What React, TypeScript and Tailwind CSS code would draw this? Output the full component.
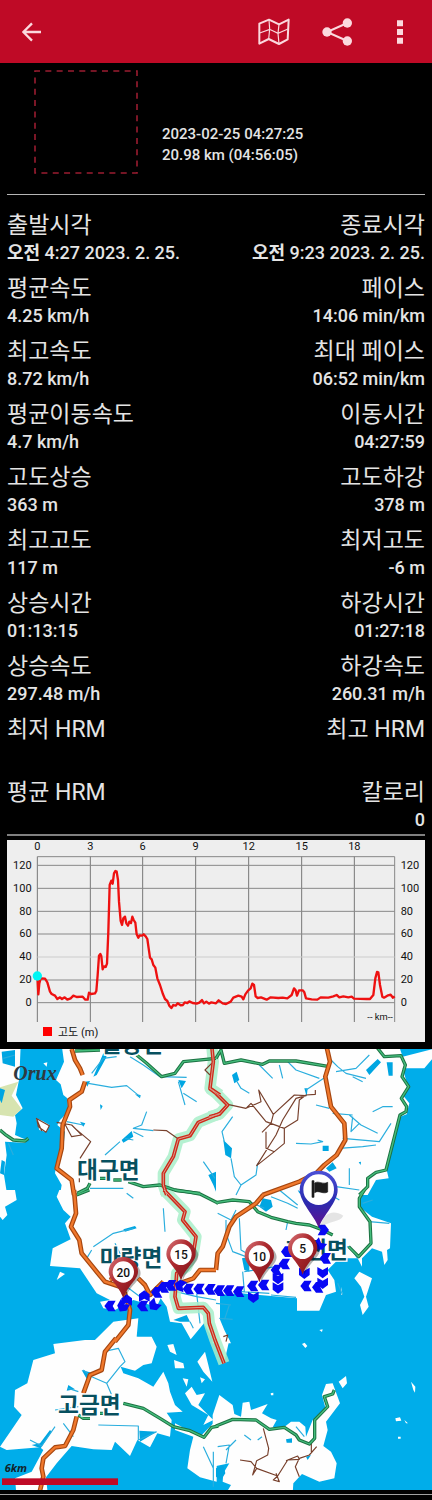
import React from "react";

type Stat = { label: string; value: string; period?: string };

const stats: [Stat, Stat][] = [
  [{ label: "출발시각", period: "오전", value: "4:27 2023. 2. 25." }, { label: "종료시각", period: "오전", value: "9:23 2023. 2. 25." }],
  [{ label: "평균속도", value: "4.25 km/h" }, { label: "페이스", value: "14:06 min/km" }],
  [{ label: "최고속도", value: "8.72 km/h" }, { label: "최대 페이스", value: "06:52 min/km" }],
  [{ label: "평균이동속도", value: "4.7 km/h" }, { label: "이동시간", value: "04:27:59" }],
  [{ label: "고도상승", value: "363 m" }, { label: "고도하강", value: "378 m" }],
  [{ label: "최고고도", value: "117 m" }, { label: "최저고도", value: "-6 m" }],
  [{ label: "상승시간", value: "01:13:15" }, { label: "하강시간", value: "01:27:18" }],
  [{ label: "상승속도", value: "297.48 m/h" }, { label: "하강속도", value: "260.31 m/h" }],
  [{ label: "최저 HRM", value: "" }, { label: "최고 HRM", value: "" }],
  [{ label: "평균 HRM", value: "" }, { label: "칼로리", value: "0" }],
];

function Header() {
  return (
    <header className="flex h-[63px] items-center bg-[#bf0a26] pr-3 pl-3 text-[#fbd9de]">
      <button aria-label="뒤로" className="flex size-10 items-center justify-center">
        <svg viewBox="0 0 60 60" className="size-5" fill="none" stroke="currentColor" strokeWidth="7">
          <path d="M57 30H5M30 4L4 30L30 56" />
        </svg>
      </button>
      <div className="flex flex-1 items-center justify-end gap-[23px]">
        <button aria-label="지도" className="flex size-10 items-center justify-center">
          <svg viewBox="0 0 96 84" className="h-7 w-8" fill="none" stroke="currentColor">
            <path d="M4 17L33 5L63 19L92 5L89 64L63 78L32 63L4 77Z" strokeWidth="6" strokeLinejoin="round" />
            <path d="M33 5L35 34L32 63M63 19L60 46L63 78M5 45L35 34L60 46L90 33" strokeWidth="3.5" />
          </svg>
        </button>
        <button aria-label="공유" className="flex size-10 items-center justify-center">
          <svg viewBox="0 0 90 84" className="h-7 w-[30px]" fill="currentColor" stroke="currentColor">
            <path d="M76 15L15 42L76 69" fill="none" strokeWidth="6" />
            <g stroke="none">
              <circle cx="76" cy="15" r="14" />
              <circle cx="15" cy="42" r="14" />
              <circle cx="76" cy="69" r="14" />
            </g>
          </svg>
        </button>
        <button aria-label="더보기" className="flex size-10 items-center justify-center">
          <svg viewBox="0 0 18 70" className="h-6 w-[6px]" fill="currentColor">
            <path d="M0 0H18V18H0ZM0 26H18V44H0ZM0 52H18V70H0Z" />
          </svg>
        </button>
      </div>
    </header>
  );
}

function Summary() {
  return (
    <section className="mx-[7px] flex items-end gap-6 border-b border-[#b5b5b5] pt-[7px] pb-5 pl-[27px]">
      <svg viewBox="0 0 104 104" className="size-[104px]" fill="none" stroke="#9a1c30" strokeWidth="1.6">
        <rect x="1" y="1" width="102" height="102" strokeDasharray="6 5.33" strokeDashoffset="1" />
      </svg>
      <p className="pb-2 text-[15px] leading-[21px] font-medium whitespace-nowrap text-[#e4e4e4]">
        2023-02-25 04:27:25
        <br />
        20.98 km (04:56:05)
      </p>
    </section>
  );
}

function Cell({ stat, right }: { stat: Stat; right?: boolean }) {
  return (
    <div className={right ? "text-right" : "text-left"}>
      <dt className="text-[23px] leading-7 font-normal whitespace-nowrap">{stat.label}</dt>
      <dd className="min-h-[26px] text-[18px] leading-[26px] font-medium whitespace-nowrap">
        {stat.period && <b>{stat.period} </b>}
        {stat.value}
      </dd>
    </div>
  );
}

const profile =
  "112,423 115,478 118,445 122,430 135,431 142,442 150,470 155,477 165,482 172,492 180,487 186,492 194,487 202,494 212,490 220,482 230,486 248,485 256,494 263,494 267,473 273,477 285,475 289,468 293,420 297,362 301,357 304,364 308,403 312,394 317,396 321,386 325,290 329,150 334,137 338,146 342,115 346,108 350,110 354,135 357,200 362,258 366,270 370,250 375,245 379,265 384,272 388,260 393,264 397,245 401,255 406,263 410,298 415,308 419,301 426,302 431,298 437,304 442,312 446,340 450,368 455,373 460,390 466,398 472,430 480,450 489,478 495,492 502,498 508,512 514,519 520,510 527,512 533,505 542,511 549,510 554,502 562,504 568,499 578,504 590,506 598,503 606,495 612,505 619,500 627,506 634,502 648,505 656,496 668,505 678,507 692,500 700,488 715,482 725,485 730,493 736,478 744,467 752,460 757,446 762,450 767,484 773,489 783,487 800,494 812,487 835,489 848,488 862,490 875,480 882,460 887,466 891,482 897,466 908,466 913,472 918,490 935,493 952,494 962,487 985,488 1000,484 1010,480 1018,487 1030,484 1045,487 1055,485 1062,491 1100,492 1110,492 1120,480 1126,430 1131,411 1135,412 1140,450 1147,485 1152,488 1162,482 1172,479 1179,488 1184,484";

const kmTicks = [
  { x: 112, t: "0" }, { x: 271, t: "3" }, { x: 428, t: "6" }, { x: 587, t: "9" },
  { x: 746, t: "12" }, { x: 905, t: "15" }, { x: 1063, t: "18" },
];
const mTicks = [
  { y: 91, t: "120" }, { y: 160, t: "100" }, { y: 229, t: "80" }, { y: 297, t: "60" },
  { y: 366, t: "40" }, { y: 435, t: "20" }, { y: 503, t: "0" },
];

function ElevationChart() {
  return (
    <section className="mx-[7px] mt-1 bg-[#eeeeee]">
      <svg viewBox="21 15 1254 606" className="block w-full" role="img" aria-label="고도 (m)" fontSize="33" fill="#111">
        <g stroke="#777" strokeWidth="3" fill="none">
          <path d="M112 65H1184M1184 65V561" stroke="#888" />
          {kmTicks.map((k) => <path key={k.t} d={`M${k.x} 65V561`} />)}
          {mTicks.map((m) => <path key={m.t} d={`M112 ${m.y}H1184`} stroke={m.t === "40" ? "#ccc" : "#888"} />)}
        </g>
        {kmTicks.map((k) => <text key={k.t} x={k.x} y="45" textAnchor="middle">{k.t}</text>)}
        {mTicks.map((m) => (
          <g key={m.t}>
            <text x="95" y={m.y + 10} textAnchor="end">{m.t}</text>
            <text x="1202" y={m.y + 10}>{m.t}</text>
          </g>
        ))}
        <polyline points={profile} fill="none" stroke="#ee1111" strokeWidth="7" strokeLinejoin="round" />
        <circle cx="112" cy="423" r="14" fill="#00f5f5" />
        <rect x="129" y="576" width="27" height="27" fill="#f00" />
        <text x="174" y="602">고도 (m)</text>
        <text x="1102" y="556" fontSize="28">-- km--</text>
      </svg>
    </section>
  );
}

type Tile = { x: number; y: number; land: string; water?: string; streams?: string; green?: string; orange?: string; red?: string; trail?: string };

const tiles: Tile[] = [
  {
    x: 0, y: -12,
    land: "M0 0H62L58 100L48 150L68 190L45 210L50 235L45 270L80 285L75 293L15 290L20 330L12 390L20 440L0 450Z M185 0L192 50L168 105L182 118L190 150L202 160L205 200L180 225L172 240L195 260L190 310L170 350L165 385L185 420L180 450H660V0Z M130 55L142 52L140 65Z M108 220L128 228L148 240L140 262L118 255Z",
    water: "M5 20L45 15L45 65L8 55Z M0 130L15 135L5 175L0 165Z M5 345L15 350L12 390L0 385Z M365 285L395 258L400 275L370 293Z M535 105L558 108L545 130Z M300 178L308 183L302 195Z M405 148L422 150L420 160Z M240 230L256 235L250 245Z M625 390L648 380V440L640 420Z M255 110L270 108L262 125Z M290 90L320 35L310 25L280 95Z",
    streams: "M265 115L335 127L380 122L420 155M275 85L310 40L350 35M440 200L425 240L400 250L460 257M400 260L430 275M360 290L315 330M535 110L555 180M550 145L590 170M610 350L645 400M270 430L370 430M10 40L45 30M200 230L250 240M390 35L430 60L480 95L560 97M25 295L40 330M375 280L400 285",
    green: "M225 18L300 15M410 30L440 55L485 95L525 85L550 50L648 40M0 255L15 268L40 285L75 288L85 280M232 445L262 430L270 415M300 400L320 400M340 405L365 405M385 410L430 425L480 420L530 437L600 445",
    orange: "M215 12L225 45L240 70L248 90M255 110L245 140L208 165L210 185L188 240L185 310L170 370L215 405L222 450",
    red: "M635 0L640 50L630 130L660 150M660 205L595 232L570 272L535 282L520 335L490 385L490 420L500 450",
    trail: "M108 220L148 242L138 262L115 245L110 222L125 258M170 232L215 240L245 270L215 275L195 238M225 250L272 290L240 340M238 400V412M460 255L500 257L535 282M635 55L615 75L630 90",
  },
  {
    x: 648, y: -12,
    land: "M-10 0H548L560 35L650 12V40L625 70L560 70L570 105L578 125L560 150L580 175L572 208L552 215L512 375L518 400L480 405L455 450H-10Z",
    water: "M450 75L485 42L495 52L460 90Z M512 52H530V92H518Z M48 90L62 80L70 105L55 115Z M22 285L48 310L45 340L28 330Z M320 302H338V318H320Z M330 370L350 352L362 370L340 380Z M265 130L275 130L272 155Z M428 352L435 350L434 360Z",
    streams: "M60 105L75 130L100 145M50 215L18 260L25 290M45 340L55 395L75 420L120 390L125 355M75 420L60 450M240 295L285 297L320 290L305 285M360 80L420 70L460 30M400 210L435 240L485 265M410 215L405 260L430 235M525 235L490 290L380 280M350 205L410 210M370 310L440 305L480 300M470 200L500 185L530 185M345 45L365 65L390 85L450 100M410 95L440 110M190 60L200 100M215 50L240 75L310 100M300 180L340 190M360 425L430 435M400 370V420M130 60L170 100M270 135L330 95",
    green: "M0 40L15 15L25 55L75 45L140 58L160 48L240 48L340 65M482 6L505 35L555 32L568 60L558 95L578 125L556 160L572 185L570 200L552 210L510 375L480 382L455 400L455 425L430 450",
    orange: "M332 6L342 50L328 95L345 185L385 235L388 285L362 330L325 360L300 385L250 410L140 450",
    red: "M-20 130L0 145L35 180L10 208L-20 215",
    trail: "M35 178L90 190L135 170L128 135L172 208L165 235L138 262M90 190L105 175L150 230L205 250L245 225L250 165L270 150L298 148V135M172 208L235 150L270 152L240 160L200 225L180 270L122 362L175 320L150 310V260M205 250V295L175 320L122 362",
  },
  {
    x: 0, y: 423,
    land: "M0 0L45 0L50 30L15 50L22 75L8 90L0 80Z M178 0L170 20L190 60L212 80L195 100L212 148L158 175L150 228L240 235L250 250L290 310L330 330L300 335L310 355L345 360L400 330L470 350L482 325L500 350L510 395L545 400L572 448L612 400L640 450H660V0Z M170 270L195 252L180 245Z M285 450L340 395L415 385L410 440L450 450Z",
    water: "M370 118L405 108L410 115L375 125Z M520 390L560 375L570 395L540 395Z",
    streams: "M280 170L340 130L400 115M345 160L365 200M490 55L495 125M465 290L590 320L648 330M560 275L560 300M260 205L275 180M570 395L580 415M380 290L420 320M590 310L600 400M380 10L400 25",
    green: "M230 15L268 0M525 0L560 5L600 12L655 40",
    orange: "M222 0L228 70L213 110L238 150L245 190L290 245L315 275L360 290L375 310L390 360L385 405L345 455M330 270L370 245M415 265L435 285L450 315L490 275M545 278L580 265L600 240L648 240",
    red: "M492 0L555 65L548 90L588 140L580 190L560 230L530 250L525 320L535 355L610 352L625 370L628 400L645 450L672 520",
  },
  {
    x: 648, y: 423,
    land: "M-10 0H440L430 50L468 80L525 100L522 175L513 180L515 210L505 225L498 185L468 175L438 205V230L425 205L370 205L335 240L355 270L360 305L330 315L310 362H243V325L75 310L0 315H-10Z M0 360L25 420L45 460H-10V360Z M415 265L430 245L468 265L450 320L458 350L440 375L432 345L445 320L435 290Z M375 290L380 315L376 315Z M310 420L320 418L318 426Z",
    water: "M130 50L140 25L165 30L170 50L150 65Z M78 205L100 200V245L85 240Z M245 0L270 15L250 10Z",
    streams: "M5 70L45 90L60 60M30 90L30 130L50 185L90 200M70 85L75 180L110 200M100 35L145 55M165 20L215 40L245 55M190 0L245 45M80 245L85 305M75 305L160 310M165 315L240 322M340 175L400 170L425 205M215 95L210 120M365 280L380 315M0 340L45 345M40 345L25 390M10 385L50 388M460 95L520 100M440 40L470 30M320 0L370 30M85 245L180 230",
    green: "M0 38L50 30L100 35L125 65L165 82L215 95L240 100L280 105L320 120L350 135M398 170L428 200L465 160L462 95L430 50L430 25L445 0",
    orange: "M142 14L120 40L60 80L40 110L20 170L5 190L0 240",
    trail: "M22 440L35 435L30 455",
  },
  {
    x: 0, y: 873,
    land: "M255 0H285L340 -10H455L470 20L455 70L430 75L405 92L362 80L370 100L415 115L460 140L490 95L505 130L510 155L525 195L548 215L500 218L515 240L510 290L472 280L450 322L412 300L390 348L345 305L335 330L280 328L215 318L170 370L138 412L142 450H48L45 415L95 395L130 330L120 322L20 330L0 320L65 225L42 200L45 150L82 130L100 60L165 40L160 12Z M502 15L520 12L530 45L510 35Z M522 60L550 70L553 85L525 85Z M592 65L615 35L625 75L637 125L610 95Z M548 115L565 118L560 140Z M600 112L615 118L605 130Z M555 160L575 140L590 165L615 160L595 195L640 240L610 255L625 225L575 195Z M525 250L600 290L650 240V425L600 412L562 385L570 330L580 290L525 270Z",
    water: "M205 135L225 148L200 152Z M245 90L275 98L265 125Z M95 315L120 310L150 270L155 275L122 325Z M418 272L470 275L420 305Z",
    streams: "M165 260L125 318L90 300M250 90L275 110L320 130L360 80L375 65L355 25L310 35M320 130L335 165M295 255L415 258V300L470 275M610 320L640 385M205 145L235 155M640 335V440M165 210L235 200M190 250L220 290",
    green: "M370 190L430 205L480 235L520 260L570 272L612 292L635 262L655 258M235 225L250 235L270 235M300 220L310 220",
    orange: "M348 -5L315 35L305 90L270 105L250 160M230 230L220 270L195 318L165 322L130 355L125 385L130 410L118 460",
  },
  {
    x: 648, y: 873,
    land: "M-10 225L10 165L50 195L55 222L75 230L80 188L100 185L105 210L155 192L138 220L165 235L182 240L170 262L200 265L225 245L250 245L268 260L270 290L290 240L330 210L318 165L330 132L350 130L372 190L330 245L335 270L322 318L345 335L362 370L355 415L310 425L258 402L232 430L230 460H30L45 435L20 425L22 400L40 370L-10 380Z M0 -10L24 70L40 0L30 -15Z M368 125L390 108L393 130L380 145Z M258 12L266 8L274 18L268 24Z M585 125L598 140L597 158L592 150Z M538 235L552 232L556 242L540 244Z M565 240L576 250L570 250Z M164 160L172 158L172 166L165 166Z M546 290H554V296H546Z",
    water: "M0 385L22 375L28 400L15 420L0 410Z M210 298L228 295L228 308L212 308Z M270 350L285 345L275 360Z",
    streams: "M5 320L40 315L30 370M30 330L60 300M85 285L105 300M125 300L138 290M240 260L265 290",
    green: "M0 258L50 238L120 240L160 268L205 262L240 285L250 300L280 312L296 295L296 240L335 200L325 170L350 162L355 150",
    trail: "M142 265L158 325L155 345L122 362L110 405L122 385L185 408L215 360L250 358L245 348L210 362M185 408L172 420L190 425L180 400M250 355L280 345L302 320M286 310V340M250 355L238 380L250 410M72 360L105 365L122 385",
  },
];

type Layer = "land" | "water" | "streams" | "green" | "orange" | "red" | "trail";

function MapLayer({ of, ...style }: { of: Layer } & React.SVGProps<SVGGElement>) {
  return (
    <g fill="none" strokeLinejoin="round" {...style}>
      {tiles.map((t, i) => t[of] && <path key={i} transform={`translate(${t.x} ${t.y})`} d={t[of]} />)}
    </g>
  );
}

const arrows: [number, number, number][] = [
  [330, 771, 0], [368, 773, -60], [380, 753, 90], [433, 741, 90], [428, 771, 0], [462, 769, -45], [470, 730, 0], [490, 715, 0],
  [512, 709, 0], [540, 709, 20], [565, 720, 0], [597, 720, 0], [630, 721, 0], [658, 725, 0], [686, 725, 0], [716, 728, 0],
  [760, 745, -90], [758, 711, 0], [791, 708, 0], [834, 717, -90], [834, 689, -90], [829, 663, 0], [853, 645, 0], [860, 608, 0],
  [913, 673, -90], [918, 711, 0], [953, 715, 0], [968, 703, -90], [968, 671, -90], [976, 628, 0], [958, 588, -50], [970, 543, 180],
];

function DistancePin({ x, y, km }: { x: number; y: number; km: string }) {
  return (
    <g transform={`translate(${x} ${y})`}>
      <path d="M4 78C25 30 60 22 50 -8C40 -35 20 -25 10 0Z" fill="#000" opacity=".3" />
      <path d="M0 77C-12 38 -44 22 -44 -3A44 44 0 0 1 44 -3C44 22 12 38 0 77Z" fill="url(#pinRed)" />
      <circle r="32" cy="-2" fill="#fff" />
      <text y="13" textAnchor="middle" fontSize="36" fontWeight="500" fill="#111">{km}</text>
    </g>
  );
}

function TrackMap() {
  return (
    <svg viewBox="0 0 1296 1323" className="mt-[7px] block w-full bg-[#00adea]" role="img" aria-label="트랙 지도">
      <defs>
        <linearGradient id="pinRed" x1="0" y1="0" x2="1" y2="1">
          <stop offset="0" stopColor="#d9787c" />
          <stop offset=".4" stopColor="#ad2a2f" />
          <stop offset="1" stopColor="#7c1016" />
        </linearGradient>
        <linearGradient id="pinBlue" x1="0" y1="0" x2="0" y2="1">
          <stop offset="0" stopColor="#4b50d6" />
          <stop offset=".55" stopColor="#2a2bb0" />
          <stop offset="1" stopColor="#65108e" />
        </linearGradient>
      </defs>
      <MapLayer of="land" fill="#fefefe" />
      <path d="M0 115L55 98L35 140L65 180L40 203L0 198Z" fill="#d7e4b0" />
      <MapLayer of="water" fill="#00a6e2" />
      <MapLayer of="streams" stroke="#2aaede" strokeWidth="3.5" />
      <MapLayer of="red" stroke="#a9efca" strokeWidth="34" opacity=".85" />
      <MapLayer of="trail" stroke="#77402c" strokeWidth="3.5" />
      <MapLayer of="green" stroke="#1c7243" strokeWidth="10" />
      <MapLayer of="green" stroke="#45bd7c" strokeWidth="4" />
      <MapLayer of="red" stroke="#cf2a1c" strokeWidth="11" />
      <MapLayer of="red" stroke="#d9a08c" strokeWidth="3" />
      <MapLayer of="orange" stroke="#a6460f" strokeWidth="14" />
      <MapLayer of="orange" stroke="#f0782c" strokeWidth="7" />
      <g fill="#07505f" stroke="#fff" strokeWidth="8" paintOrder="stroke" fontWeight="700" fontSize="68" textAnchor="middle">
        <text x="395" y="10">칠량면</text>
        <text x="325" y="388">대구면</text>
        <text x="393" y="651">마량면</text>
        <text x="950" y="627">회진면</text>
        <text x="268" y="1093">고금면</text>
      </g>
      <text x="40" y="92" fontFamily="'Liberation Serif', serif" fontStyle="italic" fontWeight="700" fontSize="60" fill="#303a40">Orux</text>
      <g fill="#0808f4">
        {arrows.map(([x, y, turn], i) => (
          <path key={i} d="M-17 0L-5 -16H17L8 0L17 16H-5Z" transform={`translate(${x} ${y}) rotate(${turn})`} />
        ))}
      </g>
      <DistancePin x={908} y={600} km="5" />
      <DistancePin x={778} y={623} km="10" />
      <DistancePin x={543} y={618} km="15" />
      <DistancePin x={370} y={671} km="20" />
      <path d="M960 535C970 490 1000 480 1030 500C1020 520 990 515 960 535Z" fill="#000" opacity=".1" />
      <path d="M956 536C944 500 899 460 899 422A57 57 0 0 1 1013 422C1013 460 968 500 956 536Z" fill="url(#pinBlue)" />
      <circle cx="956" cy="422" r="46" fill="#fff" />
      <path d="M936 395H942V445H936Z M944 402C956 394 968 408 983 400V429C968 437 956 422 944 431Z" fill="#1c1c1c" stroke="#1c1c1c" strokeWidth="2" />
      <text x="14" y="1268" fontFamily="'Open Sans', sans-serif" fontStyle="italic" fontWeight="700" fontSize="33" fill="#12232b">6km</text>
      <rect x="6" y="1288" width="348" height="20" fill="#bf0a26" />
    </svg>
  );
}

export default function App() {
  return (
    <div className="min-h-screen bg-black font-[Roboto,'Noto_Sans_CJK_KR',sans-serif] text-[#e4e4e4]">
      <Header />
      <main>
        <Summary />
        <dl className="mx-[7px] flex flex-col gap-[9px] border-b-2 border-[#808080] pt-[17px] pb-px">
          {stats.map(([a, b]) => (
            <div key={a.label} className="flex justify-between">
              <Cell stat={a} />
              <Cell stat={b} right />
            </div>
          ))}
        </dl>
        <ElevationChart />
        <TrackMap />
        <div className="h-[10px] pt-1">
          <div className="h-px bg-[#a0a0a0]" />
        </div>
      </main>
    </div>
  );
}
